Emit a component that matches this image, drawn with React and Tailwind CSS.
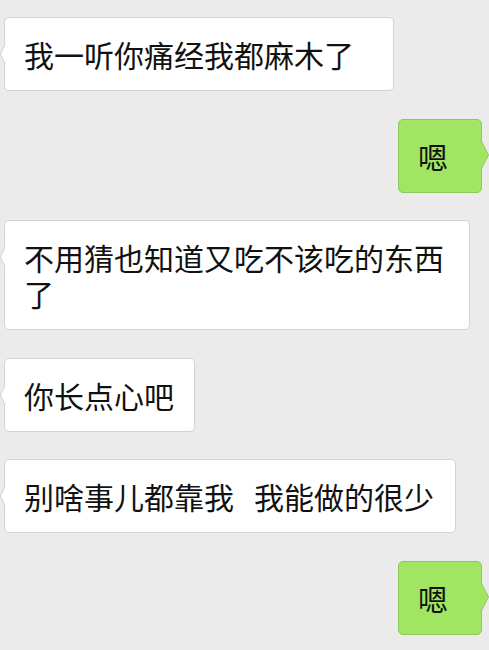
import React from 'react'

const messages = [
  { from: 'them', text: '我一听你痛经我都麻木了', extra: 'pr-[39px]' },
  { from: 'me', text: '嗯' },
  { from: 'them', text: '不用猜也知道又吃不该吃的东西了', extra: 'pr-[20px] max-w-[466px]' },
  { from: 'them', text: '你长点心吧', extra: 'pr-[20px]' },
  { from: 'them', text: '别啥事儿都靠我', after: '我能做的很少', extra: 'pr-[21px]' },
  { from: 'me', text: '嗯' }
]

function LeftTail() {
  return (
    <svg className="absolute left-[-5px] top-[25px]" width="7" height="22" viewBox="0 0 7 22">
      <polygon points="6,0 0.5,11 6,22" fill="#ffffff" />
      <polyline points="5,1 0.5,11 5,21" fill="none" stroke="#d3d3d3" strokeWidth="1" />
    </svg>
  )
}

function RightTail() {
  return (
    <svg className="absolute right-[-8px] top-[19px]" width="9" height="32" viewBox="0 0 9 32">
      <polygon points="0,0 8.5,16 0,32" fill="#a0e663" />
      <polyline points="1,1.5 8.5,16 1,30.5" fill="none" stroke="#8cc95a" strokeWidth="1" />
    </svg>
  )
}

export default function App() {
  return (
    <div
      className="h-[650px] w-[489px] overflow-hidden bg-[#ebebeb] pt-[17px] flex flex-col gap-[27.5px]"
      style={{ fontFamily: '"Noto Sans CJK SC", "Noto Sans", sans-serif' }}
    >
      {messages.map((msg, i) =>
        msg.from === 'me' ? (
          <div key={i} className="flex justify-end pr-[7px]">
            <div className="relative rounded-[5px] border border-[#8cc95a] bg-[#a0e663] pl-[19px] pr-[33px] py-[18px] text-[30px] leading-[36px] text-[#111111]">
              {msg.text}
              <RightTail />
            </div>
          </div>
        ) : (
          <div key={i} className="flex justify-start pl-[4px]">
            <div
              className={`relative rounded-[5px] border border-[#d3d3d3] bg-white pl-[19px] py-[18px] text-[30px] leading-[36px] text-[#111111] ${msg.extra}`}
            >
              {msg.text}
              {msg.after && (
                <>
                  <span className="inline-block w-[20px]" />
                  {msg.after}
                </>
              )}
              <LeftTail />
            </div>
          </div>
        )
      )}
    </div>
  )
}
